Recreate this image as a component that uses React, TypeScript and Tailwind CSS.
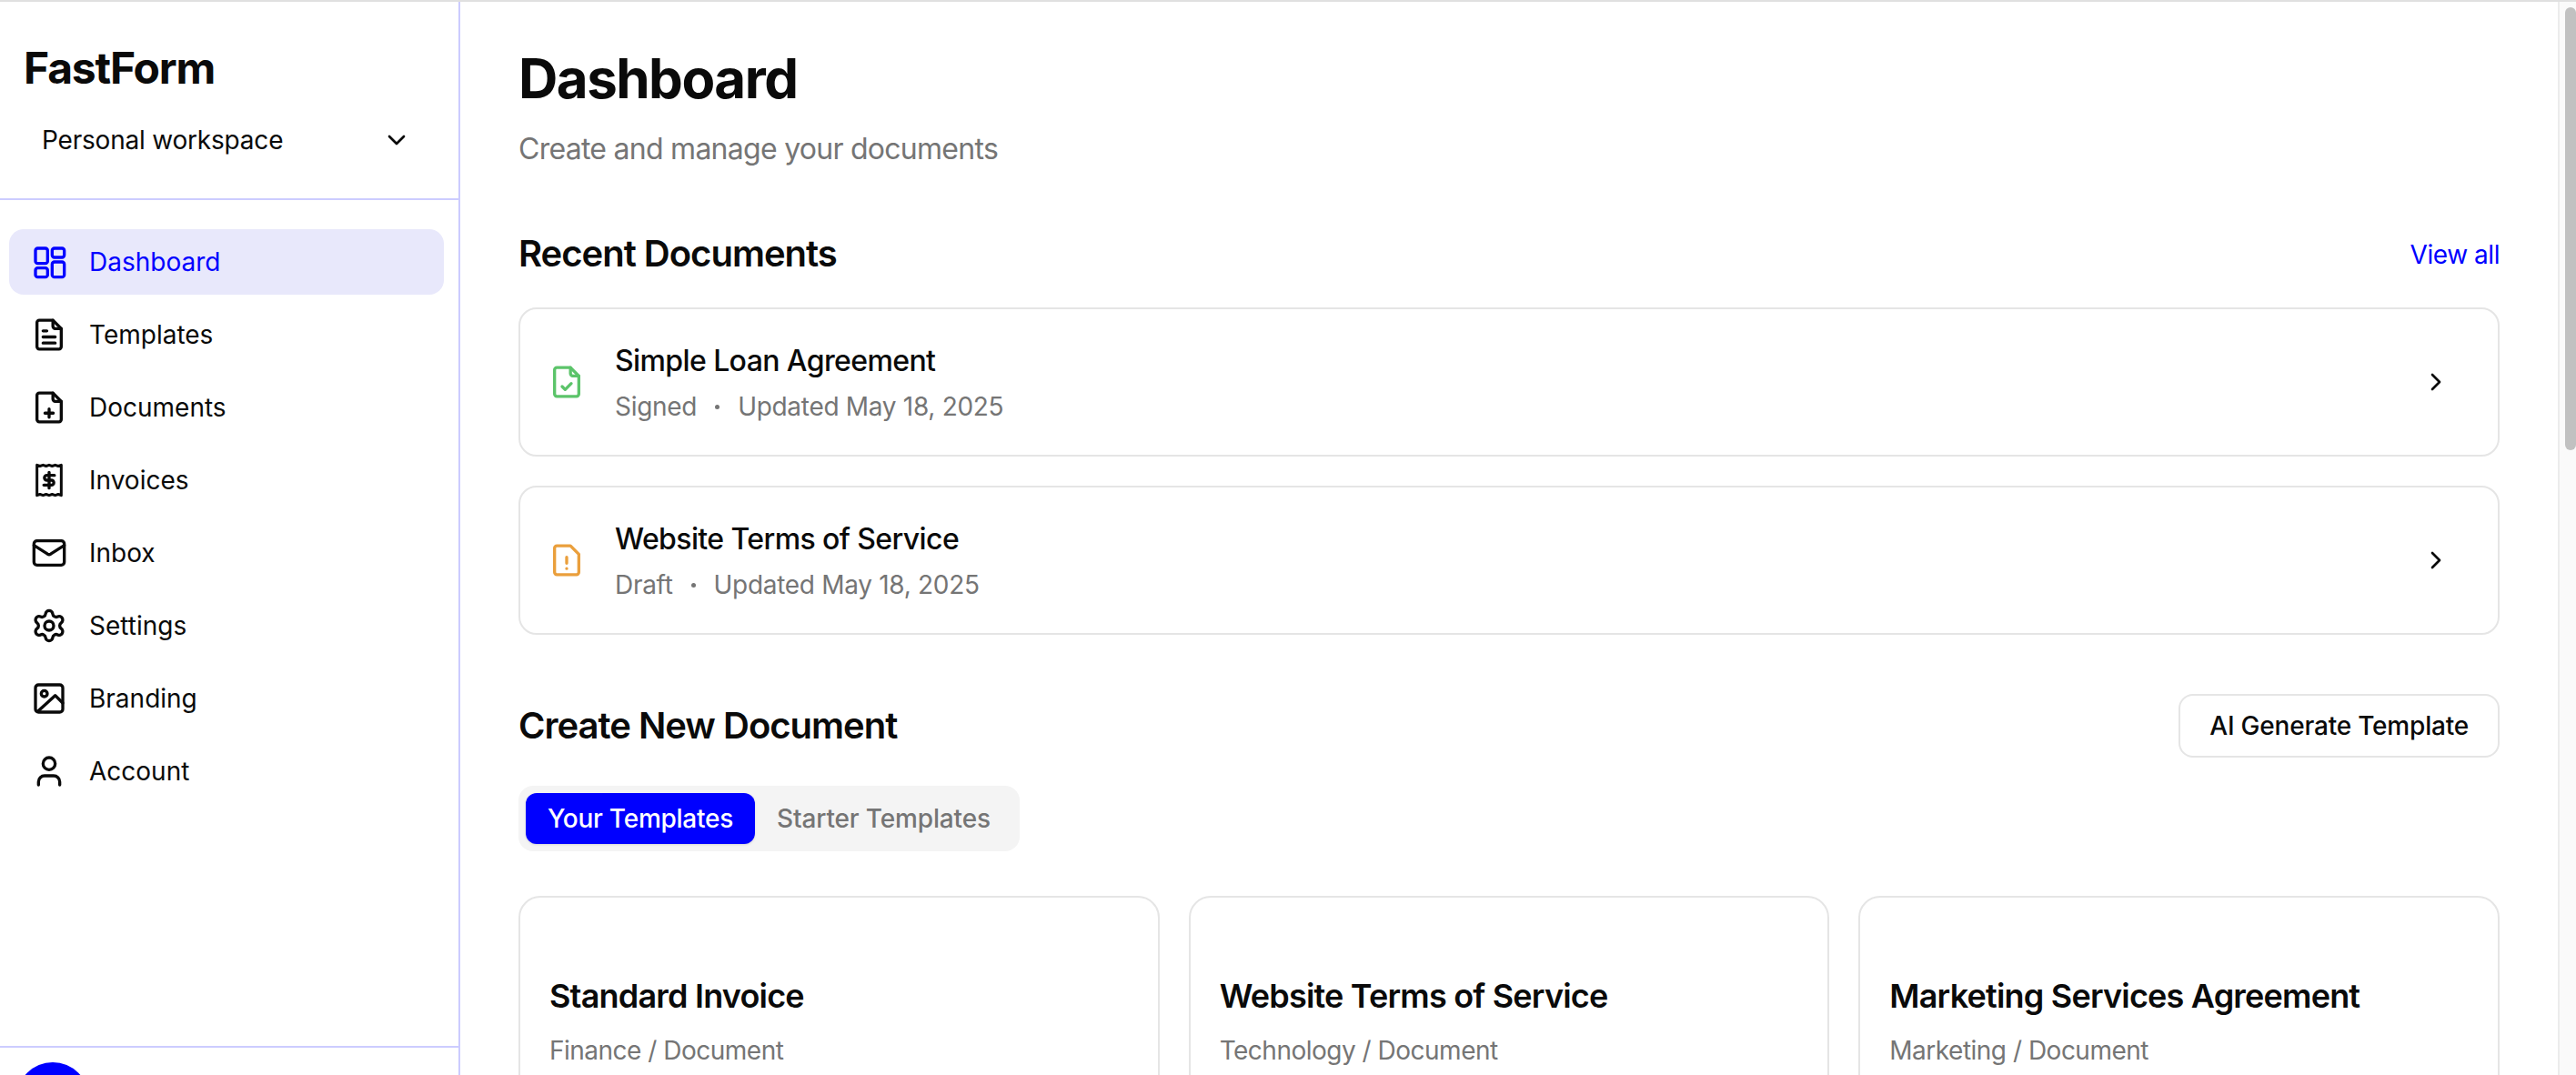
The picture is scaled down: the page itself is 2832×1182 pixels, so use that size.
import { ChevronDown, ChevronRight, Mail, Settings, User } from "lucide-react";
import type { ReactNode } from "react";

function Icon({ children, className }: { children: ReactNode; className?: string }) {
  return (
    <svg
      viewBox="0 0 24 24"
      fill="none"
      stroke="currentColor"
      strokeWidth="2"
      strokeLinecap="round"
      strokeLinejoin="round"
      className={className ?? "w-10 h-10 shrink-0"}
    >
      {children}
    </svg>
  );
}

const PAGE = "M5.5 2.5h9l5.5 5.5v12a1.5 1.5 0 0 1-1.5 1.5h-13A1.5 1.5 0 0 1 4 20V4a1.5 1.5 0 0 1 1.5-1.5z";
const FOLD = "M14.5 2.5v4A1.5 1.5 0 0 0 16 8h4";

const navItems: { label: string; icon: ReactNode }[] = [
  {
    label: "Templates",
    icon: (
      <Icon>
        <path d={PAGE} />
        <path d={FOLD} />
        <path d="M8 9.5h2.5M8 13.5h8M8 17.5h8" />
      </Icon>
    ),
  },
  {
    label: "Documents",
    icon: (
      <Icon>
        <path d={PAGE} />
        <path d={FOLD} />
        <path d="M12 13v5.5M9.25 15.75h5.5" />
      </Icon>
    ),
  },
  {
    label: "Invoices",
    icon: (
      <Icon>
        <path d="M4 2v20l2-.7 2 .7 2-.7 2 .7 2-.7 2 .7 2-.7 2 .7V2l-2 .7-2-.7-2 .7-2-.7-2 .7-2-.7-2 .7z" strokeWidth="1.8" />
        <path d="M15.5 8.8h-5a1.6 1.6 0 0 0 0 3.2h3a1.6 1.6 0 0 1 0 3.2h-5M12 6.8v10.4" />
      </Icon>
    ),
  },
  { label: "Inbox", icon: <Mail className="w-10 h-10 shrink-0" /> },
  { label: "Settings", icon: <Settings className="w-10 h-10 shrink-0" /> },
  {
    label: "Branding",
    icon: (
      <Icon>
        <rect x="3" y="3" width="18" height="18" rx="2" />
        <circle cx="8.8" cy="8.8" r="2" />
        <path d="M4.5 20.5 16 10l5 5" />
      </Icon>
    ),
  },
  { label: "Account", icon: <User className="w-10 h-10 shrink-0" /> },
];

const recentDocs = [
  { title: "Simple Loan Agreement", status: "Signed", date: "Updated May 18, 2025", kind: "signed" },
  { title: "Website Terms of Service", status: "Draft", date: "Updated May 18, 2025", kind: "draft" },
];

const templates = [
  { title: "Standard Invoice", meta: "Finance / Document" },
  { title: "Website Terms of Service", meta: "Technology / Document" },
  { title: "Marketing Services Agreement", meta: "Marketing / Document" },
];

function Sidebar() {
  return (
    <aside className="w-[506px] shrink-0 flex flex-col border-r-2 border-[#ccccff]">
      <div className="h-[218px] shrink-0 border-b-2 border-[#ccccff] pl-[26px] pr-[52px] pt-[42px]">
        <div className="text-[48px] leading-[70px] font-bold tracking-[-0.025em] text-[#0a0a0a] -mt-[4px]">FastForm</div>
        <div className="flex items-center justify-between pl-5 mt-[22px] text-[28px] leading-[44px] tracking-[-0.2px] text-[#0a0a0a]">
          <span>Personal workspace</span>
          <ChevronDown className="w-8 h-8" />
        </div>
      </div>
      <nav className="flex-1 flex flex-col gap-2 pl-[10px] pt-8 pr-4">
        <a className="flex items-center gap-6 h-[72px] pl-6 rounded-2xl bg-[#e8e8fb] text-[#0000ff] text-[28px]">
          <Icon>
            <rect x="3" y="3" width="8" height="10" rx="1.5" />
            <rect x="14" y="3" width="8" height="6" rx="1.5" />
            <rect x="14" y="12" width="8" height="10" rx="1.5" />
            <rect x="3" y="16" width="8" height="6" rx="1.5" />
          </Icon>
          Dashboard
        </a>
        {navItems.map((item) => (
          <a key={item.label} className="flex items-center gap-6 h-[72px] pl-6 rounded-2xl text-[#0a0a0a] text-[28px]">
            {item.icon}
            {item.label}
          </a>
        ))}
      </nav>
      <div className="h-[32px] shrink-0 border-t-2 border-[#ccccff] pl-[18px] pt-[16px] overflow-hidden">
        <div className="w-[80px] h-[80px] rounded-full bg-[#0000ff]" />
      </div>
    </aside>
  );
}

function RecentRow({ title, status, date, kind }: (typeof recentDocs)[number]) {
  return (
    <div className="h-[164px] flex items-center rounded-[20px] border-2 border-[#e5e5e5] pl-[31px] pr-[52px]">
      <Icon className={kind === "signed" ? "w-10 h-10 shrink-0 text-[#5cc46a]" : "w-10 h-10 shrink-0 text-[#ea9f3c]"}>
        <path d={PAGE} />
        {kind === "signed" && <path d={FOLD} />}
        {kind === "signed" ? <path d="m9 15 2 2 4-4" /> : <path d="M12 10v4M12 17.5v.01" />}
      </Icon>
      <div className="ml-[33px] flex-1">
        <div className="text-[32px] leading-[48px] font-medium tracking-[-0.6px] text-[#0a0a0a]">{title}</div>
        <div className="flex items-center text-[28px] leading-[40px] tracking-[-0.3px] text-[#757575] mt-[6px]">
          {status}
          <span className="w-[5px] h-[5px] rounded-full bg-[#757575] mx-5" />
          {date}
        </div>
      </div>
      <ChevronRight className="w-8 h-8 text-[#0a0a0a]" />
    </div>
  );
}

export default function App() {
  return (
    <div className="h-screen overflow-hidden flex flex-col bg-white border-t-2 border-[#e0e0e0] font-['Inter',sans-serif]">
      <div className="flex-1 min-h-0 flex">
        <Sidebar />
        <main className="flex-1 min-w-0 overflow-hidden pl-16 pr-16 pt-[48px]">
          <h1 className="text-[60px] leading-[72px] font-bold tracking-[-0.025em] text-[#0a0a0a]">Dashboard</h1>
          <p className="text-[32px] leading-[48px] tracking-[-0.73px] text-[#757575] mt-[18px]">Create and manage your documents</p>

          <div className="flex items-center justify-between mt-[63px]">
            <h2 className="text-[40px] leading-[56px] font-semibold tracking-[-0.025em] text-[#0a0a0a] mb-[2px]">Recent Documents</h2>
            <a className="text-[28px] tracking-[-0.45px] text-[#0000ff]">View all</a>
          </div>
          <div className="flex flex-col gap-8 mt-[29px]">
            {recentDocs.map((doc) => (
              <RecentRow key={doc.title} {...doc} />
            ))}
          </div>

          <div className="flex items-center justify-between h-[72px] mt-[64px]">
            <h2 className="text-[40px] leading-[56px] font-semibold tracking-[-0.025em] text-[#0a0a0a]">Create New Document</h2>
            <button className="h-[70px] px-[32px] rounded-2xl border-2 border-[#e5e5e5] text-[28px] font-medium tracking-[-0.2px] text-[#0a0a0a]">
              AI Generate Template
            </button>
          </div>

          <div className="inline-flex items-center h-[72px] p-2 rounded-2xl bg-[#f4f4f4] mt-[30px]">
            <div className="h-[56px] px-6 flex items-center rounded-xl bg-[#0000ff] text-white text-[28px] font-medium tracking-[-0.25px] shadow-sm">
              Your Templates
            </div>
            <div className="h-[56px] px-6 flex items-center text-[#757575] text-[28px] font-medium tracking-[-0.15px]">Starter Templates</div>
          </div>

          <div className="grid grid-cols-3 gap-8 mt-[49px]">
            {templates.map((t) => (
              <div key={t.title} className="h-[400px] rounded-[24px] border-2 border-[#e5e5e5] px-[32px] pt-[82px]">
                <div className="text-[36px] leading-[52px] font-semibold tracking-[-0.8px] text-[#0a0a0a]">{t.title}</div>
                <div className="text-[28px] leading-[40px] tracking-[-0.5px] text-[#757575] mt-[14px]">{t.meta}</div>
              </div>
            ))}
          </div>
        </main>
        <div className="w-5 shrink-0 border-l-2 border-[#ececec] bg-[#fafafa] pt-[6px] pl-[6px]">
          <div className="h-[487px] rounded-md bg-[#c1c1c1]" />
        </div>
      </div>
    </div>
  );
}
